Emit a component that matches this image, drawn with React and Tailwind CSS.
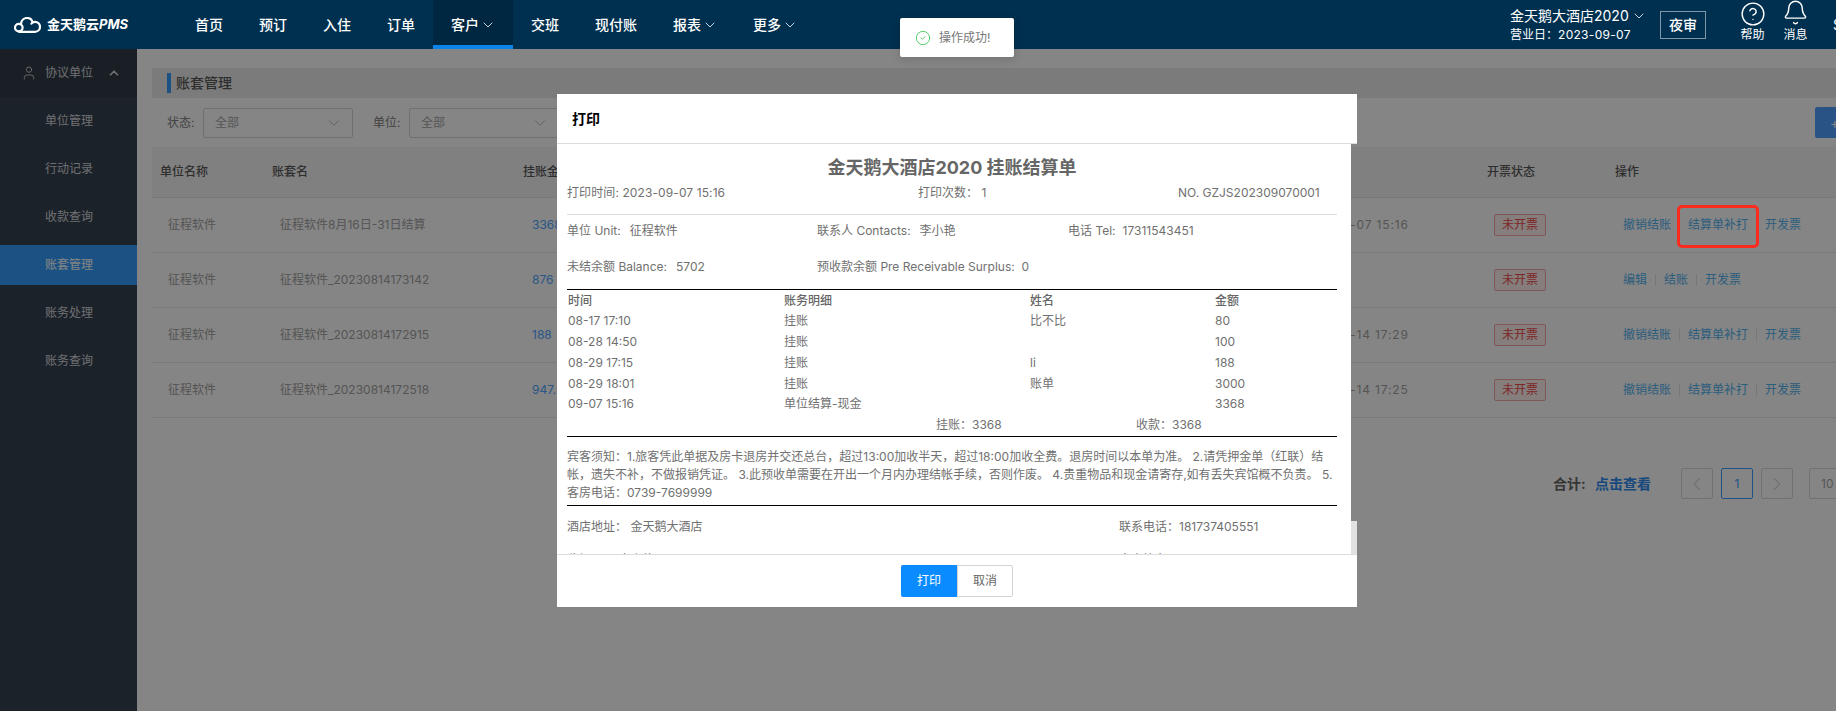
import { Bell, CheckCircle2, ChevronDown, ChevronLeft, ChevronRight, ChevronUp, CircleHelp, User } from 'lucide-react';

const navItems = [
  { label: '首页' },
  { label: '预订' },
  { label: '入住' },
  { label: '订单' },
  { label: '客户', arrow: true, active: true },
  { label: '交班' },
  { label: '现付账' },
  { label: '报表', arrow: true },
  { label: '更多', arrow: true },
];

const menuItems = ['单位管理', '行动记录', '收款查询', '账套管理', '账务处理', '账务查询'];

const rows = [
  { name: '征程软件8月16日-31日结算', amount: '3368', date: '2023-09-07 15:16', ops: ['撤销结账', '结算单补打', '开发票'] },
  { name: '征程软件_20230814173142', amount: '876', date: '', ops: ['编辑', '结账', '开发票'] },
  { name: '征程软件_20230814172915', amount: '188', date: '2023-08-14 17:29', ops: ['撤销结账', '结算单补打', '开发票'] },
  { name: '征程软件_20230814172518', amount: '947.2', date: '2023-08-14 17:25', ops: ['撤销结账', '结算单补打', '开发票'] },
];

const billRows = [
  ['08-17 17:10', '挂账', '比不比', '80'],
  ['08-28 14:50', '挂账', '', '100'],
  ['08-29 17:15', '挂账', 'li', '188'],
  ['08-29 18:01', '挂账', '账单', '3000'],
  ['09-07 15:16', '单位结算-现金', '', '3368'],
];

function CloudLogo() {
  return (
    <svg width="27" height="16" viewBox="0 0 27 16" fill="none" stroke="white" strokeWidth="2.2" strokeLinecap="round">
      <circle cx="4.8" cy="10.6" r="3.8" />
      <path d="M7 6.8C7.4 3.4 10 1 13 1c2.8 0 5 1.8 5.6 4.4" />
      <path d="M17.4 6.6c1-1.2 2.2-1.8 3.6-1.8a5 5 0 0 1 0 10H5" />
    </svg>
  );
}

function SelectBox({ className }) {
  return (
    <div className={`flex h-[30px] w-[150px] shrink-0 items-center justify-between rounded-[2px] border border-[#d6d6d6] bg-white pl-[11px] pr-[9px] text-[12px] text-[#a6a6a6] ${className || ''}`}>
      全部
      <ChevronDown size={18} strokeWidth={1} className="text-[#a6a6a6]" />
    </div>
  );
}

function PageBox({ children, active }) {
  return (
    <div className={`flex h-[31px] w-[32px] shrink-0 items-center justify-center rounded-[2px] border text-[12px] ${active ? 'border-[#3c9dff] text-[#3c9dff]' : 'border-[#d9d9d9] text-[#b5b5b5]'}`}>
      {children}
    </div>
  );
}

function TableRow({ row }) {
  return (
    <div className="flex h-[55px] items-center border-b border-[#e8e8e8] pl-4 text-[12px] text-[#a3a3a3]">
      <div className="w-[112px] shrink-0">征程软件</div>
      <div className="w-[252px] shrink-0">{row.name}</div>
      <div className="w-[762px] shrink-0 text-[#4ea6ff]">{row.amount}</div>
      <div className="w-[200px] shrink-0 tracking-[0.85px]">{row.date}</div>
      <div className="w-[129px] shrink-0">
        <span className="flex h-[22px] w-[52px] items-center justify-center rounded-[2px] border border-[#f5a5a5] bg-[#fff2f0] text-[#f04a4a]">未开票</span>
      </div>
      <div className="flex items-center text-[#54b4f0]">
        {row.ops.map((op, i) => (
          <span key={op} className="flex items-center">
            {i > 0 && <span className="mx-2 h-3 w-px bg-[#e4e4e4]" />}
            {op}
          </span>
        ))}
      </div>
    </div>
  );
}

function PrintModal() {
  return (
    <div className="absolute left-[557px] top-[94px] z-20 flex h-[513px] w-[800px] flex-col">
      <div className="flex h-[50px] shrink-0 items-center border-b border-[#dcdcdc] bg-white pl-[15px] text-[14px] font-bold text-black">打印</div>
      <div className="flex min-h-0 flex-1">
        <div className="w-[794px] overflow-hidden bg-white pl-[10px] text-[12px] leading-[18px] text-[#707070]">
          <div className="w-[770px]">
            <div className="mt-[12px] text-center text-[18px] font-bold leading-[24px] text-[#666]">金天鹅大酒店2020 挂账结算单</div>
            <div className="mt-[4px] flex h-[18px]">
              <span className="w-[351px] tracking-[0.1px]">打印时间: 2023-09-07 15:16</span>
              <span className="w-[260px]">打印次数： 1</span>
              <span>NO. GZJS202309070001</span>
            </div>
            <div className="mt-[12px] h-px bg-[#ddd]" />
            <div className="mt-[7px] flex h-[18px]">
              <span className="w-[250px]">单位 Unit:<span className="ml-[9px]">征程软件</span></span>
              <span className="w-[251px]">联系人 Contacts:<span className="ml-[9px]">李小艳</span></span>
              <span>电话 Tel:<span className="ml-[7px]">17311543451</span></span>
            </div>
            <div className="mt-[18px] flex h-[18px]">
              <span className="w-[250px]">未结余额 Balance:<span className="ml-[9px]">5702</span></span>
              <span>预收款余额 Pre Receivable Surplus:&nbsp; 0</span>
            </div>
            <div className="mt-[13px] h-px bg-black" />
            <div className="grid h-[21px] grid-cols-[216px_246px_185px_1fr] items-center pl-px font-medium text-[#666]">
              <span>时间</span>
              <span>账务明细</span>
              <span>姓名</span>
              <span>金额</span>
            </div>
            {billRows.map((r) => (
              <div key={r[0]} className="grid h-[20.75px] grid-cols-[216px_246px_185px_1fr] items-center pl-px">
                {r.map((c, i) => <span key={i}>{c}</span>)}
              </div>
            ))}
            <div className="flex h-[20px] items-center pl-[369px]">
              <span className="w-[200px]">挂账：3368</span>
              <span>收款：3368</span>
            </div>
            <div className="mt-[1px] h-px bg-black" />
            <div className="mt-[11px]">
              宾客须知：1.旅客凭此单据及房卡退房并交还总台，超过13:00加收半天，超过18:00加收全费。退房时间以本单为准。 2.请凭押金单（红联）结帐，遗失不补，不做报销凭证。 3.此预收单需要在开出一个月内办理结帐手续，否则作废。 4.贵重物品和现金请寄存,如有丢失宾馆概不负责。 5.客房电话：0739-7699999
            </div>
            <div className="mt-[3px] h-px bg-black" />
            <div className="mt-[12px] flex h-[18px]">
              <span className="w-[552px]">酒店地址：&nbsp;金天鹅大酒店</span>
              <span>联系电话：181737405551</span>
            </div>
            <div className="mt-[15px] flex h-[18px]">
              <span className="w-[552px]">收银员：&nbsp;李小艳</span>
              <span>宾客签名：</span>
            </div>
          </div>
        </div>
        <div className="flex w-[6px] flex-col justify-end">
          <div className="h-[33px] bg-[#e2e2e2]" />
        </div>
      </div>
      <div className="flex h-[53px] shrink-0 items-center justify-center border-t border-[#dcdcdc] bg-white text-[12px]">
        <button className="h-8 w-14 rounded-l-[2px] bg-[#0a8bff] text-white">打印</button>
        <button className="h-8 w-14 rounded-r-[2px] border border-[#d4d4d4] bg-white text-[#666]">取消</button>
      </div>
    </div>
  );
}

export default function App() {
  return (
    <div className="relative flex h-[711px] w-[1836px] flex-col overflow-hidden bg-white font-['Inter','Noto_Sans_CJK_SC',sans-serif]">
      <header className="relative z-20 flex h-[49px] shrink-0 items-center bg-[#00304f] text-white">
        <div className="flex w-[177px] shrink-0 items-center pl-[14px]">
          <CloudLogo />
          <span className="ml-[6px] whitespace-nowrap text-[13px] font-bold">金天鹅云<i>PMS</i></span>
        </div>
        <nav className="flex h-full text-[14px] font-medium">
          {navItems.map((item) => (
            <div key={item.label} className={`flex h-full items-center px-[18px] ${item.active ? 'border-b-4 border-[#0a84e8] bg-[#002741] pt-1' : ''}`}>
              {item.label}
              {item.arrow && <ChevronDown size={16} strokeWidth={1.2} className="ml-px mr-[-1px]" />}
            </div>
          ))}
        </nav>
        <div className="ml-auto flex h-full items-center">
          <div className="w-[150px]">
            <div className="flex items-center text-[14px] leading-[20px]">金天鹅大酒店2020<ChevronDown size={16} strokeWidth={1.2} className="ml-[2px]" /></div>
            <div className="mt-[1px] text-[12px] leading-[16px]">营业日：<span className="tracking-[0.3px]">2023-09-07</span></div>
          </div>
          <div className="flex h-7 w-[46px] items-center justify-center border border-[#7f97a7] text-[14px] font-medium">夜审</div>
          <div className="ml-[34px] mt-[1px] flex w-[25px] flex-col items-center self-start">
            <CircleHelp size={26} strokeWidth={1.3} />
            <span className="text-[12px] leading-[16px]">帮助</span>
          </div>
          <div className="ml-[18px] -mt-[1px] flex w-[25px] flex-col items-center self-start">
            <Bell size={27} strokeWidth={1.3} />
            <span className="mt-px text-[12px] leading-[16px]">消息</span>
          </div>
          <div className="ml-[25px] w-[3px] overflow-hidden text-[14px]">S</div>
        </div>
      </header>

      <div className="flex min-h-0 flex-1">
        <aside className="w-[137px] shrink-0 bg-[#36414f] text-[12px] text-[#d4d7dd]">
          <div className="flex h-12 items-center bg-[#333c48] pl-[21px]">
            <User size={16} strokeWidth={1.3} />
            <span className="ml-[8px]">协议单位</span>
            <ChevronUp size={14} strokeWidth={3} className="ml-[14px]" />
          </div>
          <div className="flex flex-col gap-2 pt-1">
            {menuItems.map((m) => (
              <div key={m} className={`flex h-10 items-center pl-[45px] ${m === '账套管理' ? 'bg-[#369dfb] text-white' : ''}`}>{m}</div>
            ))}
          </div>
        </aside>

        <main className="min-w-0 flex-1 overflow-hidden pl-[15px] pt-[19px]">
          <div className="flex h-[30px] w-[1699px] items-center bg-[#ececec] pl-[15px] text-[14px] font-medium text-[#585858]">
            <span className="mr-[5px] h-5 w-1 bg-[#369dfb]" />
            <span className="pb-[2px]">账套管理</span>
          </div>
          <div className="mt-[9px] flex w-[1800px] items-center pl-[15px] text-[12px] text-[#808080]">
            <span className="w-[36px] shrink-0">状态:</span>
            <SelectBox />
            <span className="ml-[20px] w-[36px] shrink-0">单位:</span>
            <SelectBox />
            <div className="ml-[1256px] flex h-[31px] w-[80px] shrink-0 items-center rounded-[2px] bg-[#509fff] pl-[15px] text-[14px] text-white">+</div>
          </div>
          <div className="mt-[9px] w-[1800px]">
            <div className="flex h-[51px] items-center border-b border-[#e8e8e8] bg-[#f6f6f6] pl-2 text-[12px] font-medium text-[#585858]">
              <div className="w-[112px] shrink-0">单位名称</div>
              <div className="w-[251px] shrink-0">账套名</div>
              <div className="w-[964px] shrink-0">挂账金额</div>
              <div className="w-[128px] shrink-0">开票状态</div>
              <div>操作</div>
            </div>
            {rows.map((row) => <TableRow key={row.name} row={row} />)}
          </div>
          <div className="ml-[1401px] mt-[50px] flex w-[400px] items-center">
            <span className="w-[42px] shrink-0 text-[14px] font-bold text-[#666]">合计:</span>
            <span className="w-[86px] shrink-0 text-[14px] font-bold text-[#2f8cf0]">点击查看</span>
            <PageBox><ChevronLeft size={22} strokeWidth={0.9} /></PageBox>
            <span className="w-2 shrink-0" />
            <PageBox active>1</PageBox>
            <span className="w-2 shrink-0" />
            <PageBox><ChevronRight size={22} strokeWidth={0.9} /></PageBox>
            <div className="ml-4 flex h-[31px] w-[90px] shrink-0 items-center rounded-[2px] border border-[#d9d9d9] pl-[11px] text-[12px] text-[#a6a6a6]">10 条/页</div>
          </div>
        </main>
      </div>

      <div className="absolute inset-x-0 bottom-0 top-[49px] z-10 bg-black/[.478]" />
      <PrintModal />

      <div className="absolute left-[1677px] top-[205px] z-20 h-[43px] w-[82px] rounded-[5px] border-[3px] border-[#fd2a1e]" />

      <div className="absolute left-[900px] top-[18px] z-30 flex h-[39px] w-[114px] items-center rounded-[2px] bg-white pl-[15px] text-[12px] text-[#777] shadow-[0_2px_8px_rgba(0,0,0,0.15)]">
        <CheckCircle2 size={16} strokeWidth={1.2} className="mr-[8px] text-[#2ec14a]" />
        操作成功!
      </div>
    </div>
  );
}
